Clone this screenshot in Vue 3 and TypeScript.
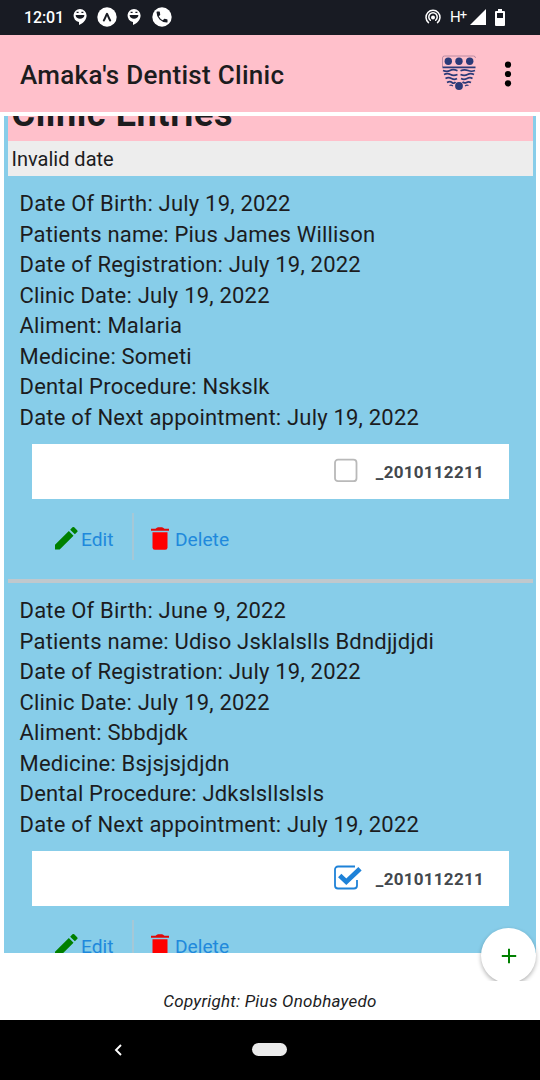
<script setup lang="ts">
interface Entry {
  id: number
  lines: string[]
  code: string
  checked: boolean
}

const entries: Entry[] = [
  {
    id: 1,
    lines: [
      'Date Of Birth: July 19, 2022',
      'Patients name: Pius James Willison',
      'Date of Registration: July 19, 2022',
      'Clinic Date: July 19, 2022',
      'Aliment: Malaria',
      'Medicine: Someti',
      'Dental Procedure: Nskslk',
      'Date of Next appointment: July 19, 2022',
    ],
    code: '_2010112211',
    checked: false,
  },
  {
    id: 2,
    lines: [
      'Date Of Birth: June 9, 2022',
      'Patients name: Udiso Jsklalslls Bdndjjdjdi',
      'Date of Registration: July 19, 2022',
      'Clinic Date: July 19, 2022',
      'Aliment: Sbbdjdk',
      'Medicine: Bsjsjsjdjdn',
      'Dental Procedure: Jdkslsllslsls',
      'Date of Next appointment: July 19, 2022',
    ],
    code: '_2010112211',
    checked: true,
  },
]
</script>

<template>
  <div class="screen">
    <div class="status">
      <span class="clock">12:01</span>
      <svg class="chat" viewBox="0 0 16 18"><path d="M8 1a6.6 6.6 0 0 0-1 13.1V17c4-1.500 7.600-5 7.600-9.400A6.600 6.600 0 0 0 8 1z" fill="#fff" /><path d="M3.600 7h8.800c0 5-8.800 5-8.800 0z" fill="#181b23" /><path d="M4.600 4.300h2M9.400 4.300h2" stroke="#181b23" stroke-width="1.300" /></svg>
      <svg class="expo" viewBox="0 0 20 20"><circle cx="10" cy="10" r="9.700" fill="#fff" /><path d="M6.800 13.500C8 11.500 9 8.500 10 6.800c1 1.700 2 4.700 3.200 6.700" fill="none" stroke="#181b23" stroke-width="2" stroke-linecap="round" stroke-linejoin="round" /></svg>
      <svg class="chat" viewBox="0 0 16 18"><path d="M8 1a6.6 6.6 0 0 0-1 13.1V17c4-1.500 7.600-5 7.600-9.400A6.600 6.600 0 0 0 8 1z" fill="#fff" /><path d="M3.600 7h8.800c0 5-8.800 5-8.800 0z" fill="#181b23" /><path d="M4.600 4.300h2M9.400 4.300h2" stroke="#181b23" stroke-width="1.300" /></svg>
      <svg class="expo" viewBox="0 0 20 20"><circle cx="10" cy="10" r="9.700" fill="#fff" /><g transform="translate(2.700 2.700) scale(.61)"><path fill="#181b23" d="M6.620 10.790a15.050 15.050 0 0 0 6.590 6.590l2.200-2.200c.27-.27.670-.36 1.020-.24 1.120.37 2.330.57 3.570.57.550 0 1 .45 1 1V20c0 .55-.45 1-1 1A17 17 0 0 1 3 4c0-.55.450-1 1-1h3.500c.55 0 1 .45 1 1 0 1.250.2 2.450.57 3.570.11.35.03.74-.25 1.020l-2.200 2.200z" /></g></svg>
      <div class="signals">
        <svg class="cast" viewBox="0 0 16 16"><g fill="none" stroke="#fff" stroke-width="1.500" stroke-linecap="round"><path d="M3.500 13.600a7 7 0 1 1 9 0" /><path d="M5.300 11.200a4.200 4.200 0 1 1 5.400 0" /></g><circle cx="8" cy="8.500" r="2" fill="#fff" /></svg>
        <span class="net">H<span class="plus">+</span></span>
        <svg class="cell" viewBox="0 0 16 16"><path d="M16 0v16H0z" fill="#fff" /></svg>
        <svg class="battery" viewBox="0 0 10 17"><path fill="#fff" fill-rule="evenodd" d="M3 0h4v2h2q1 0 1 1v13q0 1-1 1H1q-1 0-1-1V3q0-1 1-1h2zM2 4v5h6V4z" /></svg>
      </div>
    </div>

    <header class="bar">
      <h1 class="title">Amaka's Dentist Clinic</h1>
      <svg class="crest" viewBox="0 0 36 36">
        <path d="M1.500 12V3q0-2 2-2h29q2 0 2 2" fill="none" stroke="#a87f9b" stroke-width=".8" />
        <g fill="#2b3a78"><circle cx="7.300" cy="6.300" r="3.700" /><circle cx="18" cy="6.300" r="3.700" /><circle cx="28.700" cy="6.300" r="3.700" /><circle cx="18" cy="31" r="3.900" /></g>
        <g fill="none" stroke="#2b3a78" stroke-width="1.700">
          <path d="M1.500 12.300h33" />
          <path d="M2 15.500q4 1.800 7 0t7.500 .3M19.500 15.800q4-1.800 7.500-.3t7 0" />
          <path d="M3 19.500q3.500-1.800 6.500 0t7 0M19.500 19.500q4 1.800 7 0t6.500 0" />
          <path d="M4.500 23.500q3-1.600 6 0t5.500 0M20 23.500q3 1.600 6 0t5.500 0" />
          <path d="M6 27.500q3-1.600 5 0t3.500-.5M21.500 27q2 1.600 4 .5t4.500 0" />
        </g>
        <g fill="none" stroke="#2b3a78" stroke-width="1.300"><path d="M8.500 30.500q1.700-1 3.400.4M24.100 30.900q1.700-1.400 3.400-.4" /></g>
      </svg>
      <svg class="dots" viewBox="0 0 8 26"><circle cx="4" cy="3.700" r="3.100" /><circle cx="4" cy="13" r="3.100" /><circle cx="4" cy="22.300" r="3.100" /></svg>
    </header>

    <main class="list">
      <div class="heading"><h2>Clinic Entries</h2></div>
      <div class="section">Invalid date</div>
      <article v-for="entry in entries" :key="entry.id" class="entry">
        <div class="details">
          <p v-for="line in entry.lines" :key="line">{{ line }}</p>
        </div>
        <div class="check">
          <svg class="box" viewBox="0 0 28 26">
            <template v-if="entry.checked">
              <path d="M21 1.500H4A3 3 0 0 0 1 4.500V20.500a3 3 0 0 0 3 3H20a3 3 0 0 0 3-3V15" fill="none" stroke="#1e82d8" stroke-width="1.800" />
              <path d="M5.700 10.500l6.600 6.200L26 3.800" fill="none" stroke="#1e82d8" stroke-width="4.800" />
            </template>
            <rect v-else x="1" y="1.700" width="21.500" height="21.500" rx="3" fill="none" stroke="#b9b9b9" stroke-width="1.800" />
          </svg>
          <span class="code">{{ entry.code }}</span>
        </div>
        <div class="actions">
          <div class="action edit">
            <svg class="pencil" viewBox="3 3 18 18"><path fill="#008000" d="M3 17.250V21h3.750L17.810 9.940l-3.750-3.750L3 17.250zM20.710 7.040a1 1 0 0 0 0-1.410l-2.340-2.340a1 1 0 0 0-1.410 0l-1.830 1.830 3.750 3.750 1.830-1.830z" /></svg>
            <span>Edit</span>
          </div>
          <div class="action">
            <svg class="trash" viewBox="0 0 18 23"><path fill="#f00" d="M1.500 5.300h15V20.500q0 2.300-2.300 2.300H3.800q-2.300 0-2.300-2.300z" /><path fill="#e00808" d="M0 1.700h4.500Q6 .2 7 .2h4q1 0 2.500 1.500H18v2H0z" /></svg>
            <span>Delete</span>
          </div>
        </div>
      </article>
    </main>

    <footer class="footer">
      <span>Copyright: Pius Onobhayedo</span>
      <div class="fab-clip">
        <div class="fab"><svg viewBox="0 0 16 16"><path d="M8 .8v14.400M.8 8h14.400" stroke="#008000" stroke-width="2" /></svg></div>
      </div>
    </footer>

    <nav class="nav">
      <svg class="back" viewBox="0 0 8 12"><path d="M7 1L2 6l5 5" fill="none" stroke="#fff" stroke-width="1.900" /></svg>
      <span class="pill"></span>
    </nav>
  </div>
</template>

<style>
body {
  margin: 0;
}
</style>

<style scoped>
.screen {
  width: 540px;
  height: 1080px;
  display: flex;
  flex-direction: column;
  background: #fff;
  overflow: hidden;
  font-family: Roboto, "Liberation Sans", sans-serif;
  color: #1c1c1e;
}
svg {
  display: block;
  flex: none;
}
h1,
h2,
p {
  margin: 0;
}
.status {
  height: 35px;
  flex: none;
  box-sizing: border-box;
  display: flex;
  align-items: center;
  padding: 0 35px 1px 24px;
  background: #181b23;
  color: #fff;
}
.clock {
  width: 47.500px;
  font-size: 16px;
  font-weight: 500;
  letter-spacing: -0.1px;
  white-space: nowrap;
}
.chat {
  width: 16px;
  height: 18px;
  margin-right: 9px;
}
.expo {
  width: 20px;
  height: 20px;
  margin-right: 9px;
}
.expo + .chat {
  margin-right: 10px;
}
.signals {
  margin-left: auto;
  display: flex;
  align-items: center;
}
.cast {
  width: 16px;
  height: 16px;
  margin-right: 9px;
}
.net {
  width: 20px;
  font-size: 15px;
  line-height: 16px;
  margin-top: -2px;
  white-space: nowrap;
}
.plus {
  font-size: 13px;
  vertical-align: 3px;
  margin-left: -1px;
}
.cell {
  width: 16px;
  height: 16px;
  margin-right: 9px;
}
.battery {
  width: 10px;
  height: 17px;
}
.bar {
  height: 77px;
  flex: none;
  box-sizing: border-box;
  display: flex;
  align-items: center;
  padding: 2px 28px 0 20px;
  background: #ffc0cb;
}
.title {
  font-size: 26px;
  font-weight: 500;
  letter-spacing: 0.3px;
  white-space: nowrap;
}
.crest {
  width: 36px;
  height: 36px;
  margin: 0 27px 4px auto;
}
.dots {
  width: 8px;
  height: 26px;
  margin-bottom: 2px;
}
.list {
  height: 837px;
  flex: none;
  box-sizing: border-box;
  margin: 4px 4px 0;
  padding: 0 3px 0 4px;
  background: #87cde9;
  overflow: hidden;
}
.heading {
  height: 25px;
  display: flex;
  align-items: flex-end;
  padding: 0 3.500px 7px;
  box-sizing: border-box;
  background: #ffc0cb;
  overflow: hidden;
}
.heading h2 {
  font-size: 36px;
  line-height: 40px;
  font-weight: 700;
  letter-spacing: 0.6px;
}
.section {
  height: 35px;
  line-height: 37px;
  padding-left: 3.500px;
  background: #ededed;
  font-size: 20px;
}
.entry {
  height: 407px;
  box-sizing: border-box;
  border-bottom: 4px solid #c0c8cd;
  padding: 13px 24px 0;
}
.details {
  margin-left: -12.500px;
  height: 255px;
  font-size: 22px;
  letter-spacing: 0.2px;
  line-height: 30.570px;
  white-space: nowrap;
}
.check {
  height: 55px;
  box-sizing: border-box;
  padding-right: 25px;
  display: flex;
  align-items: center;
  justify-content: flex-end;
  background: #fff;
}
.box {
  width: 28px;
  height: 26px;
  margin: 0 14px 2px 0;
}
.code {
  font-size: 17px;
  font-weight: 700;
  letter-spacing: 0.28px;
  color: #43484d;
}
.actions {
  display: flex;
  margin-top: 14px;
  height: 47px;
  font-size: 19.200px;
  color: #2089dc;
}
.action {
  display: flex;
  align-items: center;
  padding: 5px 0 0 18px;
}
.edit {
  width: 77px;
  padding-left: 23px;
  border-right: 2px solid #a5c8d7;
}
.pencil {
  width: 22.500px;
  height: 22.500px;
  margin: 0 3.500px 1px 0;
}
.trash {
  width: 18px;
  height: 23px;
  margin: 0 6px 1px -1px;
}
.footer {
  position: relative;
  height: 67px;
  flex: none;
  display: flex;
  justify-content: center;
  font-size: 17px;
  font-style: italic;
  letter-spacing: 0.24px;
  line-height: 96px;
}
.fab-clip {
  position: absolute;
  right: 0;
  top: -30px;
  width: 66px;
  height: 58px;
  overflow: hidden;
}
.fab {
  width: 55px;
  height: 55px;
  margin: 5px 0 0 7px;
  border-radius: 50%;
  background: #fff;
  box-shadow: 0 2px 4px rgba(0, 0, 0, 0.3);
  display: flex;
  align-items: center;
  justify-content: center;
}
.fab svg {
  width: 16px;
  height: 16px;
}
.nav {
  height: 60px;
  flex: none;
  display: flex;
  align-items: center;
  background: #000;
}
.back {
  width: 8px;
  height: 12px;
  margin: 0 130px 1px 114px;
}
.pill {
  width: 35px;
  height: 13px;
  margin-bottom: 1px;
  border-radius: 7px;
  background: #ebebeb;
}
</style>
